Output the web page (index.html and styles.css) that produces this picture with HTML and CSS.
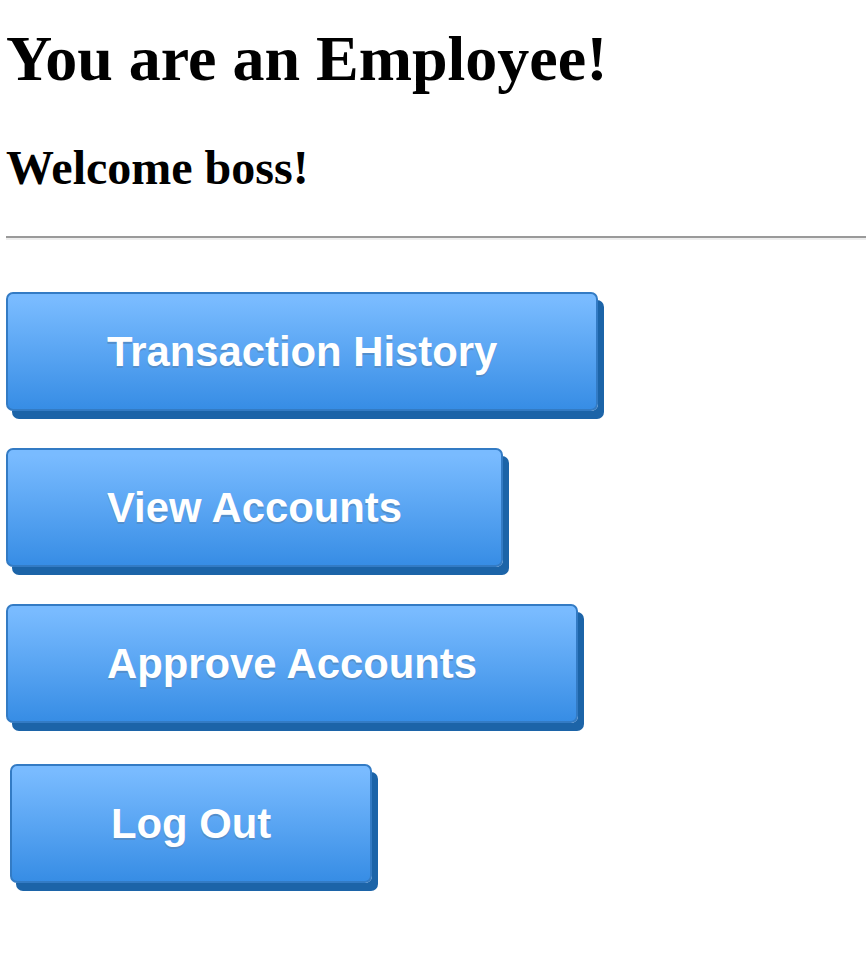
FILE: index.html
```html
<!DOCTYPE html>
<html lang="en">
<head>
<meta charset="utf-8">
<title>Employee</title>
<link rel="stylesheet" href="styles.css">
</head>
<body>
<h1 class="title">You are an Employee!</h1>
<h2 class="subtitle">Welcome boss!</h2>
<hr class="divider">
<div class="actions">
  <a class="btn" href="#">Transaction History</a>
  <a class="btn" href="#">View Accounts</a>
  <a class="btn" href="#">Approve Accounts</a>
  <a class="btn btn-logout" href="#">Log Out</a>
</div>
</body>
</html>
```

FILE: styles.css
```css
html, body {
  margin: 0;
  background: #ffffff;
}
body {
  padding: 22px 0 40px 6px;
  font-family: "Liberation Serif", "Times New Roman", serif;
  color: #000;
}
.title {
  margin: 0 0 44px;
  font-size: 64px;
  font-weight: bold;
  line-height: normal;
}
.subtitle {
  margin: 0 0 41px;
  font-size: 48px;
  font-weight: bold;
  line-height: normal;
}
.divider {
  margin: 0;
  height: 0;
  border: 0;
  border-top: 2px solid #9a9a9a;
  border-bottom: 2px solid #eeeeee;
}
.actions {
  display: flex;
  flex-direction: column;
  align-items: flex-start;
  gap: 37px;
  padding-top: 52px;
}
.btn {
  display: inline-block;
  box-sizing: border-box;
  padding: 34px 99px;
  border: 2px solid #337bc4;
  border-radius: 7px;
  background: linear-gradient(to bottom, #79bbff 5%, #378de5 100%);
  box-shadow: 6px 8px 0 0 #1c64a8;
  color: #ffffff;
  font-family: "Liberation Sans", Arial, sans-serif;
  font-size: 41.8px;
  font-weight: bold;
  line-height: 47px;
  text-decoration: none;
  text-shadow: 0 2px 0 #528ecc;
  white-space: nowrap;
}
.btn-logout {
  margin-top: 4px;
  margin-left: 4px;
}
```
